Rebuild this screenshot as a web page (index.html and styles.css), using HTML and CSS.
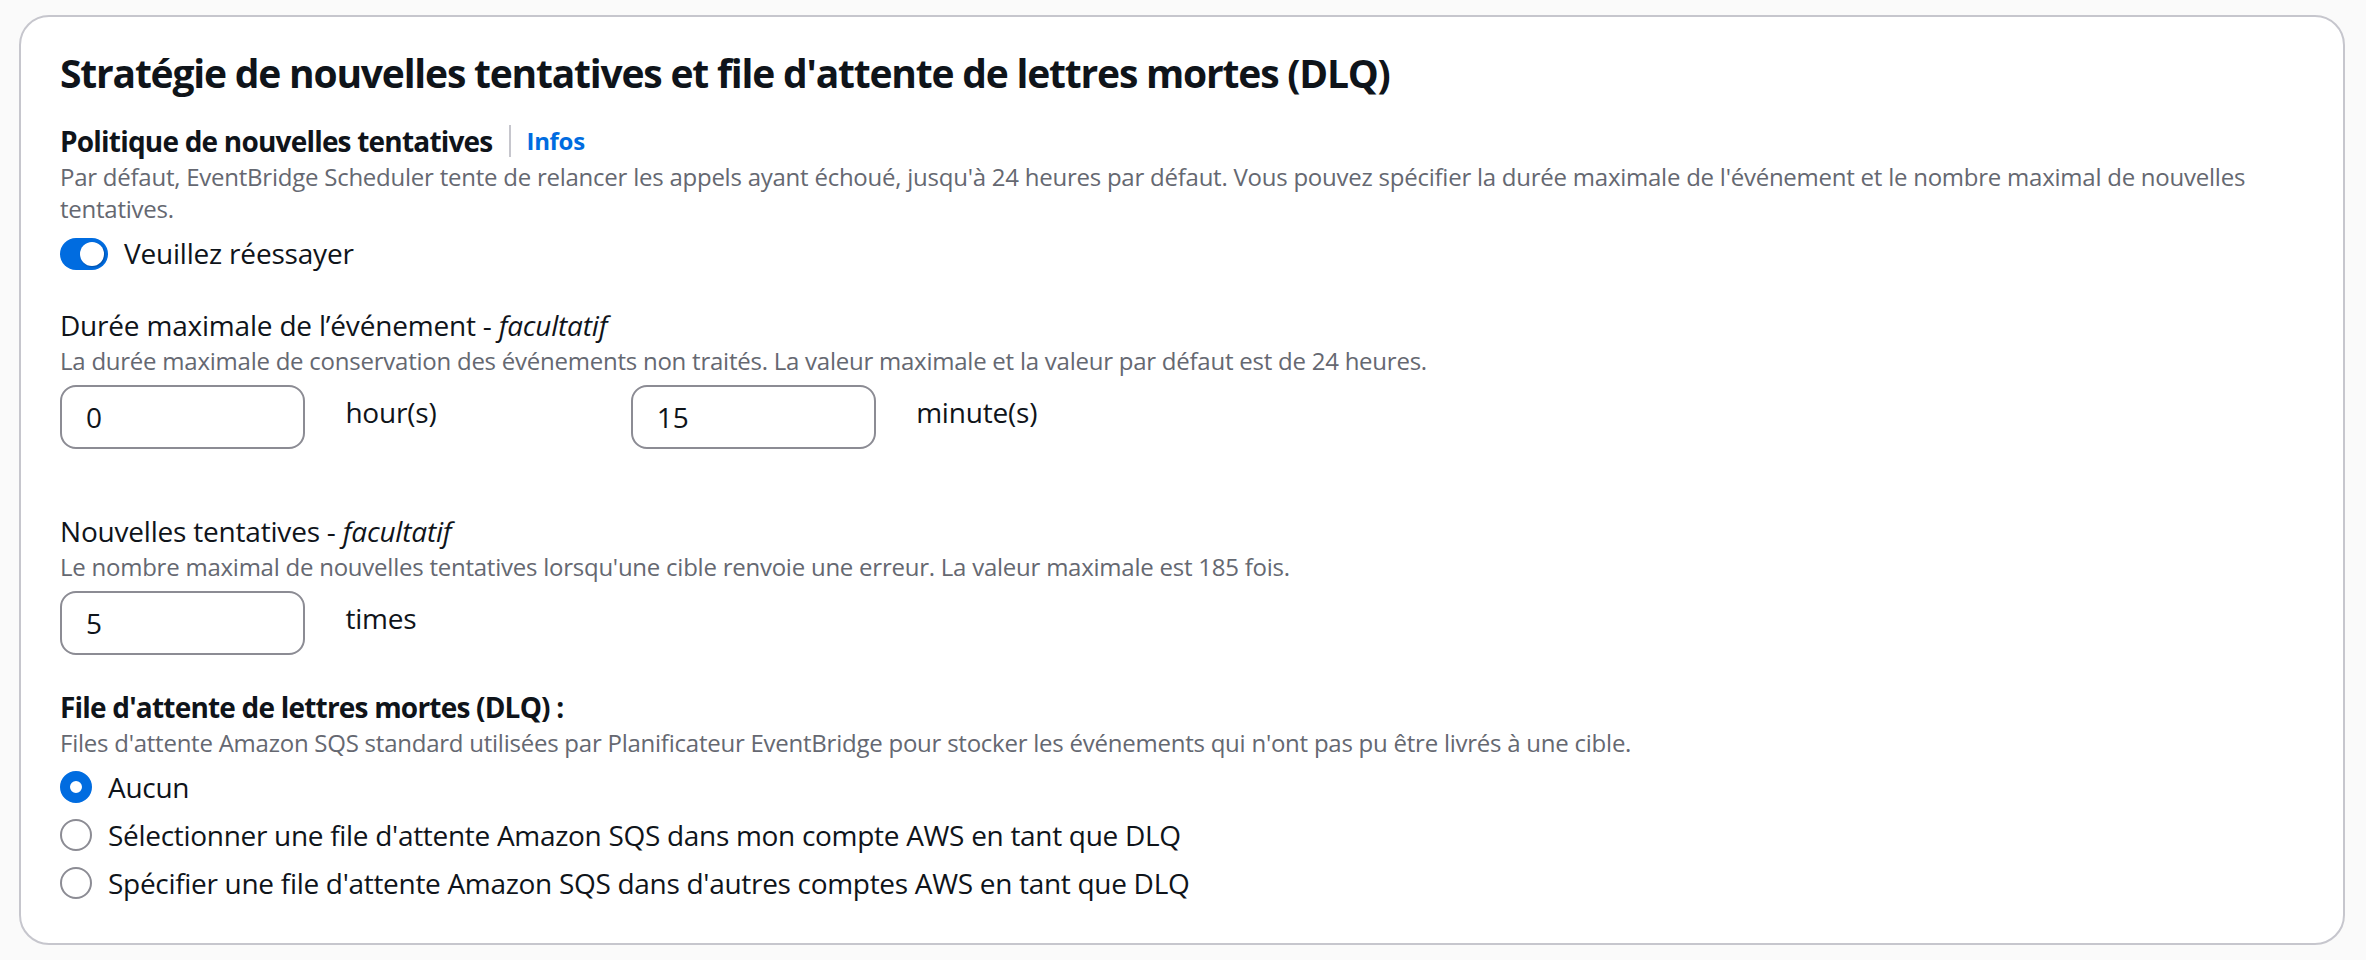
FILE: index.html
```html
<!DOCTYPE html>
<html lang="fr">
<head>
    <meta charset="UTF-8">
    <meta name="viewport" content="width=device-width, initial-scale=1.0">
    <title>Stratégie de nouvelles tentatives et DLQ</title>
    <link rel="stylesheet" href="styles.css">
</head>
<body>
    <div class="conteneur">
        <h2 class="titre">Stratégie de nouvelles tentatives et file d'attente de lettres mortes (DLQ)</h2>

        <div class="champ">
            <div class="libelle gras">
                <span>Politique de nouvelles tentatives</span>
                <span class="separateur"></span>
                <a class="infos" href="#">Infos</a>
            </div>
            <div class="description">Par défaut, EventBridge Scheduler tente de relancer les appels ayant échoué, jusqu'à 24 heures par défaut. Vous pouvez spécifier la durée maximale de l'événement et le nombre maximal de nouvelles tentatives.</div>
            <label class="bascule-ligne">
                <span class="bascule"><span class="poignee"></span></span>
                <span>Veuillez réessayer</span>
            </label>
        </div>

        <div class="champ espace-m">
            <div class="libelle"><span>Durée maximale de l’événement - <i>facultatif</i></span></div>
            <div class="description">La durée maximale de conservation des événements non traités. La valeur maximale et la valeur par défaut est de 24 heures.</div>
            <div class="grille">
                <input class="saisie" type="text" value="0">
                <span class="unite">hour(s)</span>
                <input class="saisie" type="text" value="15">
                <span class="unite">minute(s)</span>
            </div>
        </div>

        <div class="champ espace-l">
            <div class="libelle"><span>Nouvelles tentatives - <i>facultatif</i></span></div>
            <div class="description">Le nombre maximal de nouvelles tentatives lorsqu'une cible renvoie une erreur. La valeur maximale est 185 fois.</div>
            <div class="grille">
                <input class="saisie" type="text" value="5">
                <span class="unite">times</span>
            </div>
        </div>

        <div class="champ espace-m">
            <div class="libelle gras">File d'attente de lettres mortes (DLQ) :</div>
            <div class="description">Files d'attente Amazon SQS standard utilisées par Planificateur EventBridge pour stocker les événements qui n'ont pas pu être livrés à une cible.</div>
            <div class="radios">
                <label class="radio">
                    <svg class="rond" viewBox="0 0 32 32"><circle cx="16" cy="16" r="11" fill="#fff" stroke="#006ce0" stroke-width="10"/></svg>
                    <span>Aucun</span>
                </label>
                <label class="radio">
                    <svg class="rond" viewBox="0 0 32 32"><circle cx="16" cy="16" r="15" fill="#fff" stroke="#8c8c94" stroke-width="2"/></svg>
                    <span>Sélectionner une file d'attente Amazon SQS dans mon compte AWS en tant que DLQ</span>
                </label>
                <label class="radio">
                    <svg class="rond" viewBox="0 0 32 32"><circle cx="16" cy="16" r="15" fill="#fff" stroke="#8c8c94" stroke-width="2"/></svg>
                    <span>Spécifier une file d'attente Amazon SQS dans d'autres comptes AWS en tant que DLQ</span>
                </label>
            </div>
        </div>
    </div>
</body>
</html>
```
FILE: styles.css
```css
body {
    font-family: "Open Sans", "Noto Sans", Arial, sans-serif;
    background-color: #fafafa;
    color: #0f141a;
    margin: 0;
    padding: 15px 21px 0 19px;
}

.conteneur {
    background-color: #fff;
    border: 2px solid #c6c6cd;
    border-radius: 30px;
    padding: 32px 40px 40px 39px;
}

.titre {
    font-size: 39px;
    line-height: 48px;
    font-weight: 700;
    letter-spacing: -1.2px;
    margin: 0 0 24px;
}

.libelle {
    font-size: 28px;
    line-height: 40px;
    letter-spacing: -0.2px;
    display: flex;
    align-items: center;
}

.libelle.gras {
    font-weight: 700;
    letter-spacing: -0.8px;
}

.separateur {
    width: 2px;
    height: 32px;
    background-color: #c6c6cd;
    margin: 0 15px 0 17px;
}

.infos {
    font-size: 24px;
    font-weight: 700;
    letter-spacing: -0.3px;
    color: #006ce0;
    text-decoration: none;
}

.description {
    font-size: 24px;
    line-height: 32px;
    letter-spacing: -0.24px;
    color: #656871;
}

.espace-m {
    margin-top: 32px;
}

.espace-l {
    margin-top: 62px;
}

.bascule-ligne {
    display: flex;
    align-items: flex-start;
    gap: 16px;
    margin-top: 8px;
    font-size: 28px;
    line-height: 40px;
    letter-spacing: -0.2px;
}

.bascule {
    width: 48px;
    height: 32px;
    margin-top: 5px;
    border-radius: 16px;
    background-color: #006ce0;
    display: flex;
    align-items: center;
    justify-content: flex-end;
    padding-right: 4px;
    box-sizing: border-box;
}

.poignee {
    width: 24px;
    height: 24px;
    border-radius: 50%;
    background-color: #fff;
    box-shadow: 1px 1px 2px rgba(0, 7, 22, 0.3);
}

.grille {
    display: grid;
    grid-template-columns: repeat(8, 1fr);
    column-gap: 40px;
    margin-top: 8px;
}

.saisie {
    height: 64px;
    box-sizing: border-box;
    width: 100%;
    border: 2px solid #8c8c94;
    border-radius: 16px;
    padding: 0 24px;
    font-family: inherit;
    font-size: 28px;
    color: #0f141a;
    background-color: #fff;
}

.unite {
    font-size: 28px;
    line-height: 40px;
    letter-spacing: -0.2px;
    padding-top: 7px;
}

.radios {
    display: flex;
    flex-direction: column;
    gap: 8px;
    margin-top: 8px;
}

.radio {
    display: flex;
    align-items: flex-start;
    gap: 16px;
    font-size: 28px;
    line-height: 40px;
    letter-spacing: -0.3px;
}

.rond {
    width: 32px;
    height: 32px;
    margin-top: 4px;
    flex-shrink: 0;
}
```
